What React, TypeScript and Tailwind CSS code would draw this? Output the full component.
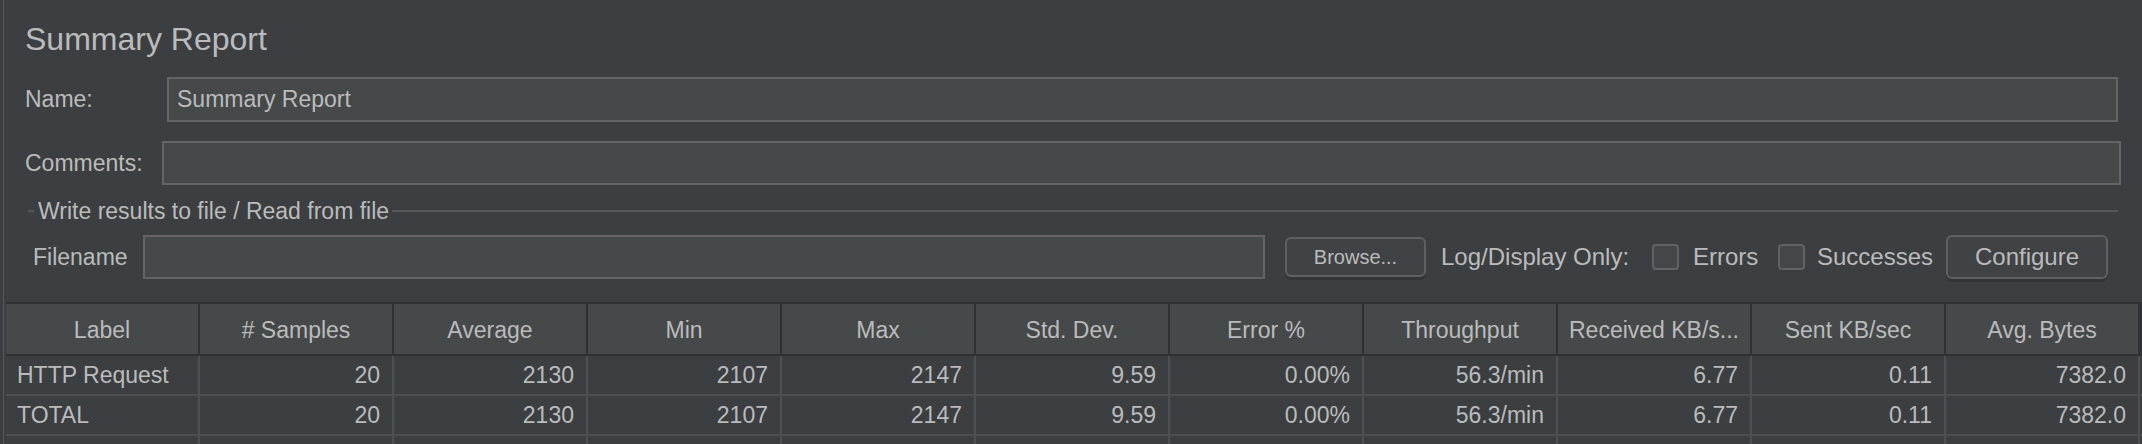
const columns = [
  "Label",
  "# Samples",
  "Average",
  "Min",
  "Max",
  "Std. Dev.",
  "Error %",
  "Throughput",
  "Received KB/s...",
  "Sent KB/sec",
  "Avg. Bytes",
];

const stats = ["20", "2130", "2107", "2147", "9.59", "0.00%", "56.3/min", "6.77", "0.11", "7382.0"];

const rows = [
  ["HTTP Request", ...stats],
  ["TOTAL", ...stats],
  ["", "", "", "", "", "", "", "", "", "", ""],
];

const Checkbox = () => (
  <div className="w-[27px] h-[26px] shrink-0 rounded-[4px] border-2 border-[#5f6365] bg-[#43474a]" />
);

const App = () => {
  return (
    <div
      className="w-[2142px] h-[444px] overflow-hidden flex bg-[#3c3f41] text-[#bbbbbb]"
      style={{ fontFamily: '"Liberation Sans", Arial, sans-serif' }}
    >
      {/* Left edge */}
      <div className="w-[3px] shrink-0" />
      <div className="w-px shrink-0 bg-[#56595b]" />

      <div className="flex-1 flex flex-col">
        {/* Title */}
        <div className="shrink-0 ml-[21px] mt-[24px] h-[31px] text-[32px] leading-[31px]">Summary Report</div>

        {/* Name */}
        <div className="shrink-0 mt-[22px] h-[45px] flex items-center text-[23px]">
          <span className="ml-[21px] w-[142px] shrink-0">Name:</span>
          <div className="flex-1 mr-[24px] h-full flex items-center pl-[8px] bg-[#45494a] border-2 border-[#646464]">
            Summary Report
          </div>
        </div>

        {/* Comments */}
        <div className="shrink-0 mt-[19px] h-[44px] flex items-center text-[23px]">
          <span className="ml-[21px] w-[137px] shrink-0">Comments:</span>
          <div className="flex-1 mr-[21px] h-full bg-[#45494a] border-2 border-[#646464]" />
        </div>

        {/* Fieldset title */}
        <div className="shrink-0 mt-[14px] h-[24px] flex items-center text-[23px]">
          <div className="ml-[24px] w-[6px] h-[2px] bg-[#555859]" />
          <span className="ml-[4px] leading-[24px] whitespace-nowrap">Write results to file / Read from file</span>
          <div className="flex-1 ml-[3px] mr-[24px] h-[2px] bg-[#555859]" />
        </div>

        {/* Filename row */}
        <div className="shrink-0 mt-[12px] h-[44px] flex items-center text-[23px] whitespace-nowrap">
          <span className="ml-[29px] w-[110px] shrink-0">Filename</span>
          <div className="w-[1122px] h-full shrink-0 bg-[#45494a] border-2 border-[#646464]" />
          <button className="ml-[20px] w-[141px] h-[40px] shrink-0 rounded-[6px] border-2 border-[#5e6163] bg-[#3f4345] text-[20px] text-[#bbbbbb] shadow-[0_3px_0_#333638]">
            Browse...
          </button>
          <span className="ml-[15px] w-[211px] shrink-0 text-[24px]">Log/Display Only:</span>
          <Checkbox />
          <span className="ml-[14px] w-[85px] shrink-0 text-[24px]">Errors</span>
          <Checkbox />
          <span className="ml-[12px] w-[129px] shrink-0 text-[24px]">Successes</span>
          <button className="w-[162px] h-[44px] shrink-0 rounded-[6px] border-2 border-[#5e6163] bg-[#3f4345] text-[24px] text-[#bbbbbb] shadow-[0_3px_0_#333638]">
            Configure
          </button>
        </div>

        {/* Table */}
        <div className="shrink-0 mt-[23px] ml-[2px] text-[23px]">
          <div className="grid grid-cols-[repeat(11,194px)] border-y-2 border-[#2f3234] bg-[#2f3234]">
            {columns.map((col) => (
              <div
                key={col}
                className="h-[50px] pt-[3px] flex items-center justify-center bg-[#45494a] border-r-2 border-[#2f3234] whitespace-nowrap"
              >
                {col}
              </div>
            ))}
          </div>
          {rows.map((row, i) => (
            <div key={i} className="grid grid-cols-[repeat(11,194px)] border-b-2 border-[#4d5153]">
              {row.map((cell, j) => (
                <div
                  key={j}
                  className={`h-[38px] pt-[1px] flex items-center border-r-2 border-[#4d5153] whitespace-nowrap ${
                    j === 0 ? "justify-start pl-[11px]" : "justify-end pr-[12px]"
                  }`}
                >
                  {cell}
                </div>
              ))}
            </div>
          ))}
        </div>
      </div>
    </div>
  );
};

export default App;
